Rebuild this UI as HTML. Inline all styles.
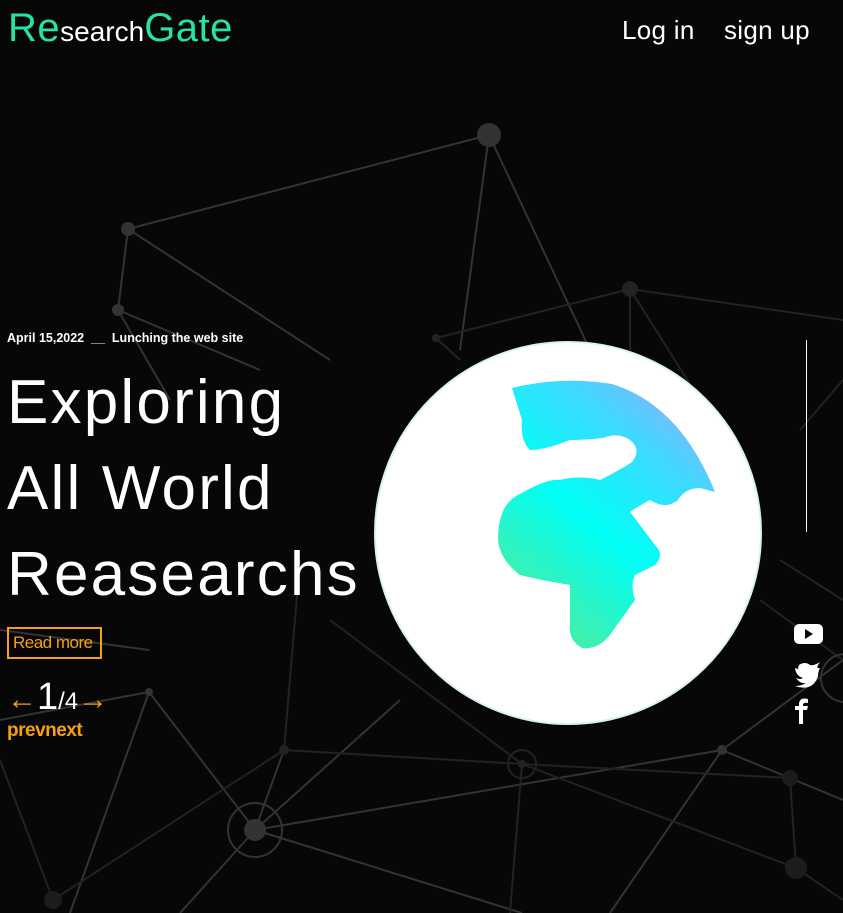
<!DOCTYPE html>
<html><head><meta charset="utf-8"><style>
*{margin:0;padding:0;box-sizing:border-box}
body{width:843px;height:913px;background:#070707;overflow:hidden;position:relative;font-family:"Liberation Sans",sans-serif;color:#fff}
svg.bg{position:absolute;left:0;top:0}
.logo{position:absolute;left:8px;top:6px;font-size:40px;color:#27e3a0;letter-spacing:0.5px}
.logo span{font-size:28px;color:#fff;letter-spacing:0}
.nav{position:absolute;top:15px;font-size:26px;letter-spacing:0.3px}
.date{position:absolute;left:7px;top:331px;font-size:12.5px;font-weight:bold}
h1{position:absolute;left:7px;top:360px;font-size:62px;font-weight:normal;line-height:86px;letter-spacing:2.2px}
.rm{position:absolute;left:7px;top:627px;width:95px;height:32px;border:2px solid #f6a012;color:#f6a012;font-size:17px;padding:4px 4px;letter-spacing:-0.5px;white-space:nowrap}
.pg{position:absolute;left:7px;top:676px;color:#f6a012;font-size:30px;font-weight:bold;white-space:nowrap}
.pg b{color:#fff;font-weight:normal;font-size:38px}
.pg i{color:#fff;font-style:normal;font-weight:normal;font-size:24px}
.pn{position:absolute;left:7px;top:720px;color:#f6a012;font-size:19px;font-weight:bold;letter-spacing:-0.5px}
.vl{position:absolute;left:806px;top:340px;width:1px;height:192px;background:#fff}
</style></head><body>
<svg class="bg" width="843" height="913" viewBox="0 0 843 913">
<g stroke="#333" stroke-width="2" fill="none">
<line x1="489" y1="135" x2="128" y2="229"/><line x1="128" y1="229" x2="118" y2="310"/>
<line x1="128" y1="229" x2="330" y2="360"/><line x1="489" y1="135" x2="460" y2="350"/>
<line x1="489" y1="135" x2="590" y2="350"/><line x1="118" y1="310" x2="260" y2="370"/>
<line x1="118" y1="310" x2="170" y2="400"/>
<line x1="255" y1="830" x2="722" y2="750"/><line x1="255" y1="830" x2="522" y2="913"/>
<line x1="255" y1="830" x2="180" y2="913"/><line x1="255" y1="830" x2="149" y2="692"/>
<line x1="255" y1="830" x2="284" y2="750"/><line x1="255" y1="830" x2="400" y2="700"/>
<line x1="149" y1="692" x2="0" y2="720"/><line x1="149" y1="692" x2="70" y2="913"/>
<line x1="722" y1="750" x2="843" y2="800"/><line x1="722" y1="750" x2="610" y2="913"/>
<line x1="722" y1="750" x2="843" y2="660"/><line x1="0" y1="630" x2="149" y2="650"/>
</g>
<g stroke="#222" stroke-width="2" fill="none">
<line x1="630" y1="289" x2="436" y2="338"/><line x1="630" y1="289" x2="843" y2="320"/>
<line x1="630" y1="289" x2="700" y2="400"/><line x1="630" y1="289" x2="630" y2="350"/>
<line x1="436" y1="338" x2="460" y2="360"/><line x1="284" y1="750" x2="522" y2="764"/>
<line x1="522" y1="764" x2="790" y2="778"/><line x1="522" y1="764" x2="796" y2="868"/>
<line x1="522" y1="764" x2="510" y2="913"/><line x1="284" y1="750" x2="53" y2="900"/>
<line x1="790" y1="778" x2="796" y2="868"/><line x1="796" y1="868" x2="843" y2="900"/>
<line x1="300" y1="560" x2="284" y2="750"/><line x1="330" y1="620" x2="522" y2="764"/>
<line x1="0" y1="760" x2="53" y2="900"/><line x1="760" y1="600" x2="843" y2="660"/>
<line x1="800" y1="430" x2="843" y2="380"/><line x1="780" y1="560" x2="843" y2="600"/>
</g>
<circle cx="489" cy="135" r="12" fill="#333"/><circle cx="128" cy="229" r="7" fill="#333"/>
<circle cx="118" cy="310" r="6" fill="#333"/><circle cx="630" cy="289" r="8" fill="#222"/>
<circle cx="436" cy="338" r="4" fill="#222"/><circle cx="149" cy="692" r="4" fill="#333"/>
<circle cx="284" cy="750" r="5" fill="#222"/><circle cx="722" cy="750" r="5" fill="#333"/>
<circle cx="790" cy="778" r="8" fill="#1c1c1c"/><circle cx="796" cy="868" r="11" fill="#1c1c1c"/>
<circle cx="53" cy="900" r="9" fill="#1c1c1c"/>
<circle cx="255" cy="830" r="27" fill="none" stroke="#333" stroke-width="2"/><circle cx="255" cy="830" r="11" fill="#333"/>
<circle cx="522" cy="764" r="14" fill="none" stroke="#222" stroke-width="2"/><circle cx="522" cy="764" r="4" fill="#222"/>
<circle cx="845" cy="678" r="24" fill="none" stroke="#333" stroke-width="2"/>
<defs><linearGradient id="g" x1="0.3" y1="0.9" x2="0.9" y2="0"><stop offset="0" stop-color="#3ef0b0"/><stop offset="0.35" stop-color="#00fff6"/><stop offset="0.7" stop-color="#40d8ff"/><stop offset="1" stop-color="#a0a8f8"/></linearGradient></defs>
<ellipse cx="568" cy="533" rx="193" ry="191" fill="#fff" stroke="#d8f4e8" stroke-width="2"/>
<path d="M512 388 Q560 376 612 384 Q680 405 715 492 L700 488 Q685 488 678 500 Q666 510 650 500 Q632 510 630 512 L655 545 Q665 555 655 565 L635 575 Q630 585 635 600 L612 632 Q600 650 582 648 Q568 640 570 625 L570 585 Q540 580 520 575 Q500 560 498 540 Q498 505 518 495 Q548 478 560 480 Q580 475 600 480 Q620 470 632 462 Q642 450 630 440 Q618 432 603 438 Q585 440 570 440 Q545 450 530 450 Q520 440 522 420 Z" fill="url(#g)"/>
<g fill="#fff"><rect x="794" y="624" width="29" height="20" rx="5"/></g>
<path d="M805 629 L813 634 L805 639 Z" fill="#070707"/>
<path d="M820 662 Q814 666 810 665 Q805 661 799 665 Q797 670 799 673 Q802 670 795 668 Q796 676 803 678 Q800 680 796 678 Q800 684 806 683 Q801 686 795 686 Q813 692 818 676 Q818 672 820 668 Q816 669 818 665 Z" fill="#fff"/>
<path d="M799 724 L799 710 L795 710 L795 706 L799 706 L799 703 Q800 697 808 699 L808 703 Q803 702 803 705 L803 706 L808 706 L807 710 L803 710 L803 724 Z" fill="#fff"/>
</svg>
<div class="logo">Re<span>search</span>Gate</div>
<div class="nav" style="left:622px">Log in</div>
<div class="nav" style="left:724px">sign up</div>
<div class="date">April 15,2022 &nbsp;__ &nbsp;Lunching the web site</div>
<h1>Exploring<br>All World<br>Reasearchs</h1>
<div class="rm">Read more</div>
<div class="pg">←<b>1</b><i>/4</i>→</div>
<div class="pn">prevnext</div>
<div class="vl"></div>
</body></html>
